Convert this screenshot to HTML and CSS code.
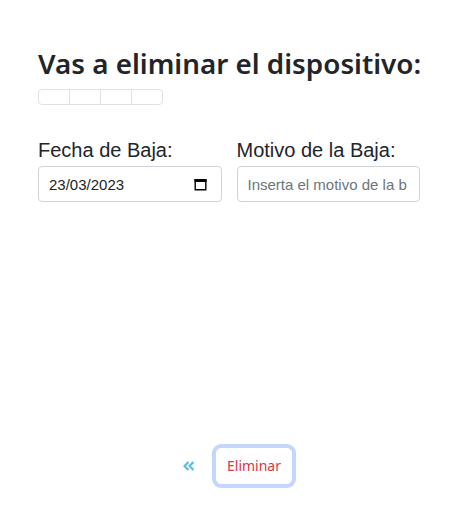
FILE: index.html
```html
<!DOCTYPE html>
<html lang="es">
<head>
<meta charset="utf-8">
<link rel="stylesheet" href="styles.css">
</head>
<body>
<div class="page">
  <h2 class="title">Vas a eliminar el dispositivo:</h2>
  <table class="device">
    <tr><td></td><td></td><td></td><td></td></tr>
  </table>
  <div class="row">
    <div class="col">
      <label class="label">Fecha de Baja:</label>
      <div class="input date">
        <span>23/03/2023</span>
        <svg width="13" height="14" viewBox="0 0 13 14"><path d="M1.2 2.7h10.6v10.1H1.2z" fill="none" stroke="#000" stroke-width="1.4"/><rect x="0.5" y="2" width="12" height="3" fill="#000"/></svg>
      </div>
    </div>
    <div class="col">
      <label class="label">Motivo de la Baja:</label>
      <div class="input text"><span class="ph">Inserta el motivo de la b</span></div>
    </div>
  </div>
  <div class="actions">
    <svg class="back" width="12" height="10" viewBox="0 0 12 10"><path d="M5.5 1 1.5 5l4 4M10.5 1l-4 4 4 4" fill="none" stroke="#5bc0de" stroke-width="2.4" stroke-linejoin="round"/></svg>
    <div class="btn">Eliminar</div>
  </div>
</div>
</body>
</html>
```
FILE: styles.css
```css
html, body { margin: 0; padding: 0; background: #fff; }
body { font-family: "Liberation Sans", Arial, sans-serif; color: #212529; }
.page { width: 382px; margin-left: 38px; padding-top: 47px; padding-bottom: 20px; }
.title { font-family: "Noto Sans", sans-serif; font-weight: 600; font-size: 27.8px; line-height: 33px; margin: 0 0 9px; color: #212529; white-space: nowrap; }
.device { border-collapse: separate; border-spacing: 0; border: 1px solid #dee2e6; border-radius: 4px; margin: 0; }
.device td { width: 30px; height: 14px; padding: 0; border-left: 1px solid #dee2e6; }
.device td:first-child { border-left: none; }
.row { display: flex; gap: 15px; margin-top: 33px; }
.col { flex: 1; display: flex; flex-direction: column; }
.label { font-size: 20px; line-height: 24px; margin-bottom: 4px; color: #212529; }
.input { height: 36px; box-sizing: border-box; border: 1px solid #ced4da; border-radius: 4px; display: flex; align-items: center; padding: 0 10px; font-size: 15px; }
.date { justify-content: space-between; padding-right: 14px; }
.ph { color: #6c757d; white-space: nowrap; overflow: hidden; }
.actions { display: flex; align-items: center; gap: 21px; margin-top: 246px; padding-left: 145px; }
.back { display: block; }
.btn { font-family: "Noto Sans", sans-serif; font-size: 14px; line-height: 34px; color: #dc3545; background: #fff; border: 1px solid #fff; border-radius: 5px; width: 74px; height: 34px; text-align: center; box-shadow: 0 0 0 4px #c5d6fc; }
```
